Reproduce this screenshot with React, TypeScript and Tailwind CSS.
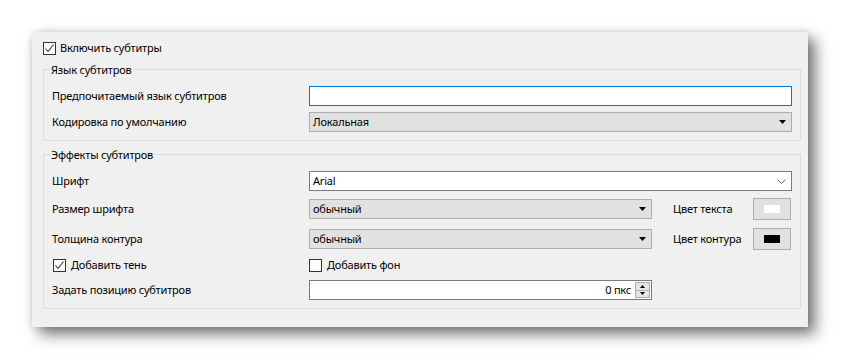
import React from 'react';

function CheckBox({ checked }: { checked?: boolean }) {
  return (
    <div className="w-[13px] h-[13px] border border-[#333333] bg-white flex items-center justify-center shrink-0">
      {checked && (
        <svg width="11" height="11" viewBox="0 0 11 11">
          <path d="M1.5 5.5 L4 8.5 L9.5 1.5" fill="none" stroke="#333333" strokeWidth="1.1" />
        </svg>
      )}
    </div>
  );
}

function Triangle() {
  return (
    <svg width="7" height="4" viewBox="0 0 7 4">
      <path d="M0 0 L7 0 L3.5 4 Z" fill="#000" />
    </svg>
  );
}

function Chevron() {
  return (
    <svg width="9" height="5" viewBox="0 0 9 5">
      <path d="M0.5 0.5 L4.5 4.5 L8.5 0.5" fill="none" stroke="#606060" strokeWidth="1" />
    </svg>
  );
}

function Combo({ value, width }: { value: string; width: string }) {
  return (
    <div className={`${width} h-[20px] bg-[#e1e1e1] border border-[#adadad] flex items-center pl-[3px] pr-[5px]`}>
      <span className="flex-1">{value}</span>
      <Triangle />
    </div>
  );
}

function ColorButton({ color }: { color: string }) {
  return (
    <div className="ml-auto mr-[1px] w-[38px] h-[22px] bg-[#e1e1e1] border border-[#adadad] flex items-center justify-center">
      <div className={`w-[16px] h-[8px] ${color}`} />
    </div>
  );
}

function Group({ title, children }: { title: string; children: React.ReactNode }) {
  return (
    <div className="relative border border-[#dcdcdc] pl-[8px] pr-[8px] pt-[16px] pb-[8px]">
      <span className="absolute left-[6px] top-[-8px] px-[1px] bg-[#f0f0f0] leading-[16px]">{title}</span>
      {children}
    </div>
  );
}

export default function App() {
  return (
    <div className="min-h-screen bg-white pt-[32px] pl-[32px] font-['Noto_Sans',sans-serif] text-[11px] tracking-[-0.2px] text-black">
      <div className="w-[776px] h-[295px] bg-[#f0f0f0] pl-[11px] pr-[7px] pt-[10px] shadow-[0_0_6px_rgba(0,0,0,0.12),7px_7px_14px_rgba(0,0,0,0.55)]">
        <div className="h-[13px] flex items-center gap-[4px]">
          <CheckBox checked />
          <span>Включить субтитры</span>
        </div>

        <div className="mt-[14px]">
          <Group title="Язык субтитров">
            <div className="flex flex-col gap-[6px]">
              <div className="flex items-center h-[20px]">
                <span className="w-[257px]">Предпочитаемый язык субтитров</span>
                <div className="w-[483px] h-[20px] bg-white border border-[#0078d7]" />
              </div>
              <div className="flex items-center h-[20px]">
                <span className="w-[257px]">Кодировка по умолчанию</span>
                <Combo value="Локальная" width="w-[483px]" />
              </div>
            </div>
          </Group>
        </div>

        <div className="mt-[13px]">
          <Group title="Эффекты субтитров">
            <div className="flex items-center h-[20px]">
              <span className="w-[257px]">Шрифт</span>
              <div className="w-[483px] h-[20px] bg-white border border-[#7a7a7a] flex items-center pl-[3px] pr-[5px]">
                <span className="flex-1">Arial</span>
                <Chevron />
              </div>
            </div>
            <div className="flex items-center h-[22px] mt-[7px]">
              <span className="w-[257px]">Размер шрифта</span>
              <Combo value="обычный" width="w-[343px]" />
              <span className="ml-[21px]">Цвет текста</span>
              <ColorButton color="bg-white" />
            </div>
            <div className="flex items-center h-[22px] mt-[8px]">
              <span className="w-[257px]">Толщина контура</span>
              <Combo value="обычный" width="w-[343px]" />
              <span className="ml-[21px]">Цвет контура</span>
              <ColorButton color="bg-black" />
            </div>
            <div className="flex items-center h-[13px] mt-[9px]">
              <div className="w-[257px] flex items-center gap-[5px] pl-[1px]">
                <CheckBox checked />
                <span>Добавить тень</span>
              </div>
              <div className="flex items-center gap-[5px]">
                <CheckBox />
                <span>Добавить фон</span>
              </div>
            </div>
            <div className="flex items-center h-[20px] mt-[8px]">
              <span className="w-[257px]">Задать позицию субтитров</span>
              <div className="w-[343px] h-[20px] bg-white border border-[#7a7a7a] flex items-center justify-end pr-[1px]">
                <span className="mr-[4px]">0 пкс</span>
                <div className="w-[15px] h-[16px] border border-[#adadad] bg-[#e5e5e5] flex flex-col">
                  <div className="flex-1 flex items-center justify-center border-b border-[#adadad]">
                    <svg width="5" height="3" viewBox="0 0 5 3">
                      <path d="M0 3 L5 3 L2.5 0 Z" fill="#000" />
                    </svg>
                  </div>
                  <div className="flex-1 flex items-center justify-center">
                    <svg width="5" height="3" viewBox="0 0 5 3">
                      <path d="M0 0 L5 0 L2.5 3 Z" fill="#000" />
                    </svg>
                  </div>
                </div>
              </div>
            </div>
          </Group>
        </div>
      </div>
    </div>
  );
}
